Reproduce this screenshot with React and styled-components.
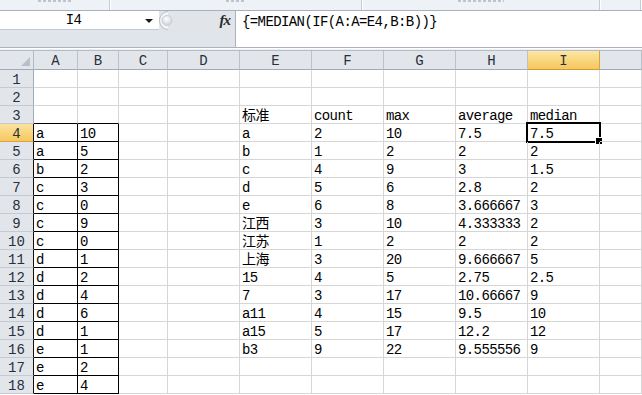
import React from 'react';
import styled, { createGlobalStyle } from 'styled-components';

const GlobalStyle = createGlobalStyle`
  html, body { margin: 0; padding: 0; background: #ffffff; }
  body { overflow: hidden; }
  * { box-sizing: border-box; }
`;

const CELL_FONT = `"Liberation Mono", "Noto Sans CJK SC", monospace`;

const Frame = styled.div`
  width: 642px;
  height: 395px;
  overflow: hidden;
  display: flex;
  flex-direction: column;
  font-family: ${CELL_FONT};
  background: #ffffff;
`;

const RibbonEdge = styled.div`
  height: 11px;
  flex: none;
  display: flex;
  background: #eef1f5;
  border-bottom: 1px solid #a7b0bb;
  overflow: hidden;
`;

const RibbonGroup = styled.div`
  width: ${p => p.$w ? `${p.$w}px` : 'auto'};
  flex: ${p => p.$w ? 'none' : '1'};
  border-right: 1px solid #c3cbd6;
  box-shadow: 1px 0 0 #ffffff;
  margin-right: 1px;
  display: flex;
  justify-content: center;
  align-items: flex-start;
`;

const LabelTail = styled.span`
  width: ${p => p.$w}px;
  height: 2px;
  margin-left: ${p => p.$offset}px;
  background: repeating-linear-gradient(90deg, #9aa6b8 0 3px, transparent 3px 5px);
  opacity: 0.6;
`;

const FormulaArea = styled.div`
  height: 37px;
  flex: none;
  display: flex;
  background: #e1e5ea;
  border-bottom: 1px solid #a9b2bd;
`;

const LeftTools = styled.div`
  width: 236px;
  flex: none;
  display: flex;
  flex-direction: column;
  border-right: 1px solid #a9b2bd;
`;

const ToolRow = styled.div`
  height: 19px;
  display: flex;
  align-items: center;
`;

const NameBox = styled.div`
  width: 159px;
  height: 19px;
  background: #ffffff;
  display: flex;
  align-items: center;
  border-bottom: 1px solid #c2c9d2;
`;

const NameText = styled.span`
  flex: 1;
  text-align: center;
  font-size: 14px;
  letter-spacing: -0.6px;
  color: #000;
  padding-left: 2px;
`;

const DropArrow = styled.span`
  width: 0;
  height: 0;
  border-left: 4px solid transparent;
  border-right: 4px solid transparent;
  border-top: 4px solid #1b1b1b;
  margin-right: 6px;
  margin-top: 2px;
`;

const Grip = styled.svg`
  flex: none;
`;

const Fx = styled.span`
  margin-left: auto;
  margin-right: 5px;
  font-family: "Liberation Serif", serif;
  font-style: italic;
  font-weight: bold;
  font-size: 15px;
  color: #2b2b2b;
  letter-spacing: -1px;
`;

const FormulaInput = styled.div`
  flex: 1;
  background: #ffffff;
  padding: 2px 0 0 6px;
  font-size: 14px;
  letter-spacing: -0.6px;
  line-height: 18px;
  color: #000;
  white-space: nowrap;
`;

const Splitter = styled.div`
  height: 3px;
  flex: none;
  background: #eceff3;
  border-top: 1px solid #ffffff;
  border-bottom: 1px solid #b4bcc7;
`;

const Sheet = styled.div`
  flex: none;
  display: grid;
  grid-template-columns: 34px 44px 41px 49px repeat(6, 72px) 1fr;
  grid-template-rows: 19px;
  grid-auto-rows: 18px;
`;

const Corner = styled.div`
  background: #e2e6eb;
  border-right: 1px solid #b1bac5;
  border-bottom: 1px solid #9fabba;
  position: relative;
  &::after {
    content: '';
    position: absolute;
    right: 3px;
    bottom: 3px;
    width: 0;
    height: 0;
    border-left: 9px solid transparent;
    border-bottom: 9px solid #b9bfc8;
  }
`;

const ColHead = styled.div`
  background: ${p => p.$sel ? 'linear-gradient(#fbe6a2, #f6c75c)' : '#e2e6eb'};
  border-right: 1px solid ${p => p.$sel ? '#d9a33f' : '#b9c1cc'};
  border-bottom: 1px solid ${p => p.$sel ? '#d29a35' : '#9fabba'};
  display: flex;
  align-items: center;
  justify-content: center;
  font-size: 14px;
  color: #28303c;
  padding-top: 1px;
`;

const RowHead = styled.div`
  background: ${p => p.$sel ? 'linear-gradient(#fbe3a0, #f6c85e)' : '#e2e6eb'};
  border-right: 1px solid ${p => p.$boxed ? '#111111' : '#9fabba'};
  border-bottom: 1px solid ${p => p.$sel ? '#d9a33f' : '#c3cad3'};
  display: flex;
  align-items: center;
  justify-content: center;
  font-size: 14px;
  color: #28303c;
  padding-top: 2px;
`;

const Cell = styled.div`
  position: relative;
  border-right: 1px solid ${p => p.$boxRight ? '#000000' : '#d6d6d6'};
  border-bottom: 1px solid ${p => p.$boxBottom ? '#000000' : '#d6d6d6'};
  padding: 3px 0 0 2px;
  font-size: 14px;
  line-height: 14px;
  letter-spacing: -0.6px;
  color: #000000;
  white-space: nowrap;
`;

const Selection = styled.span`
  position: absolute;
  left: -2px;
  top: -2px;
  right: -2px;
  bottom: -2px;
  border: 2px solid #000000;
  pointer-events: none;
  &::after {
    content: '';
    position: absolute;
    right: -4px;
    bottom: -4px;
    width: 6px;
    height: 6px;
    background: #000000;
    border: 1px solid #ffffff;
  }
`;

const COLS = ['A', 'B', 'C', 'D', 'E', 'F', 'G', 'H', 'I', 'J'];

const listAB = [
  ['a', '10'], ['a', '5'], ['b', '2'], ['c', '3'], ['c', '0'], ['c', '9'], ['c', '0'],
  ['d', '1'], ['d', '2'], ['d', '4'], ['d', '6'], ['d', '1'], ['e', '1'], ['e', '2'], ['e', '4'],
];

const summary = [
  ['标准', 'count', 'max', 'average', 'median'],
  ['a', '2', '10', '7.5', '7.5'],
  ['b', '1', '2', '2', '2'],
  ['c', '4', '9', '3', '1.5'],
  ['d', '5', '6', '2.8', '2'],
  ['e', '6', '8', '3.666667', '3'],
  ['江西', '3', '10', '4.333333', '2'],
  ['江苏', '1', '2', '2', '2'],
  ['上海', '3', '20', '9.666667', '5'],
  ['15', '4', '5', '2.75', '2.5'],
  ['7', '3', '17', '10.66667', '9'],
  ['a11', '4', '15', '9.5', '10'],
  ['a15', '5', '17', '12.2', '12'],
  ['b3', '9', '22', '9.555556', '9'],
];

function cellValue(row, col) {
  if ((col === 'A' || col === 'B') && row >= 4 && row <= 18) {
    return listAB[row - 4][col === 'A' ? 0 : 1];
  }
  const idx = ['E', 'F', 'G', 'H', 'I'].indexOf(col);
  if (idx >= 0 && row >= 3 && row <= 16) {
    return summary[row - 3][idx];
  }
  return '';
}

function GripIcon() {
  return (
    <Grip width="17" height="19" viewBox="0 0 17 19">
      <defs>
        <radialGradient id="gknob" cx="45%" cy="35%" r="70%">
          <stop offset="0%" stopColor="#ffffff" />
          <stop offset="100%" stopColor="#c9ced6" />
        </radialGradient>
      </defs>
      <path d="M9 0.5 A8.5 9 0 0 0 9 18.5" fill="#f3f5f8" stroke="#b7bec8" strokeWidth="1" />
      <circle cx="8" cy="9.5" r="5" fill="url(#gknob)" stroke="#c0c6cf" strokeWidth="0.8" />
    </Grip>
  );
}

export default function App() {
  const rows = Array.from({ length: 18 }, (_, i) => i + 1);
  return (
    <>
      <GlobalStyle />
      <Frame>
        <RibbonEdge>
          <RibbonGroup $w={110}><LabelTail $w={34} $offset={0} /></RibbonGroup>
          <RibbonGroup $w={251}><LabelTail $w={20} $offset={0} /></RibbonGroup>
          <RibbonGroup $w={237}><LabelTail $w={46} $offset={0} /></RibbonGroup>
          <RibbonGroup />
        </RibbonEdge>
        <FormulaArea>
          <LeftTools>
            <ToolRow>
              <NameBox>
                <NameText>I4</NameText>
                <DropArrow />
              </NameBox>
              <GripIcon />
              <Fx>fx</Fx>
            </ToolRow>
          </LeftTools>
          <FormulaInput>{'{=MEDIAN(IF(A:A=E4,B:B))}'}</FormulaInput>
        </FormulaArea>
        <Splitter />
        <Sheet>
          <Corner />
          {COLS.map(c => (
            <ColHead key={c} $sel={c === 'I'}>{c === 'J' ? '' : c}</ColHead>
          ))}
          {rows.map(r => (
            <React.Fragment key={r}>
              <RowHead $sel={r === 4} $boxed={r >= 4}>{r}</RowHead>
              {COLS.map(c => {
                const inBox = (c === 'A' || c === 'B') && r >= 4;
                const topOfBox = (c === 'A' || c === 'B') && r === 3;
                return (
                  <Cell key={c} $boxRight={inBox} $boxBottom={inBox || topOfBox}>
                    {cellValue(r, c)}
                    {c === 'I' && r === 4 && <Selection />}
                  </Cell>
                );
              })}
            </React.Fragment>
          ))}
        </Sheet>
      </Frame>
    </>
  );
}
